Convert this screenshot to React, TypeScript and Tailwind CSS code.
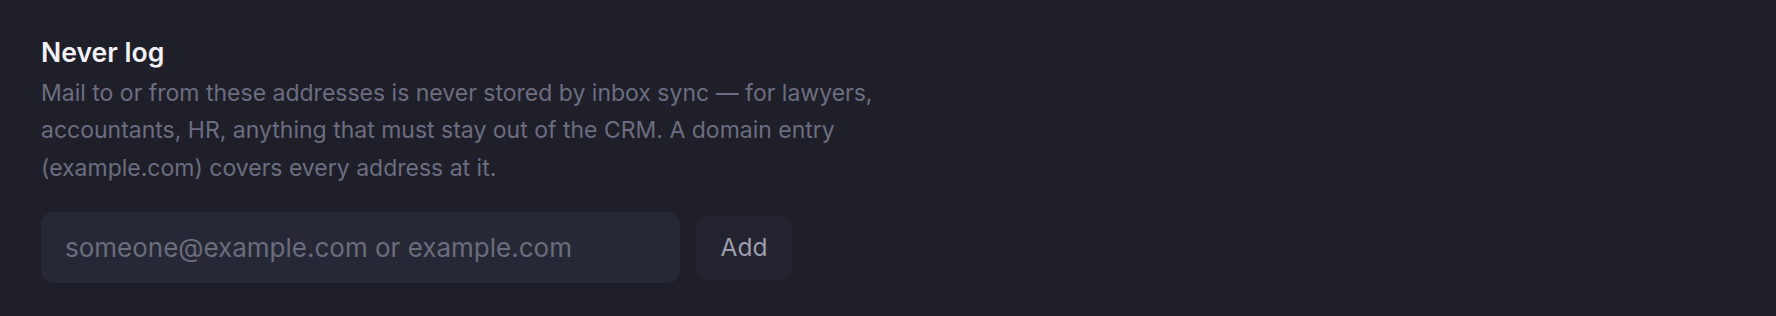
import { useState } from 'react';

const NeverLog = () => {
  const [value, setValue] = useState('');

  return (
    <section className="min-h-[316px] bg-[#1f1f29] px-[41px] pt-[33px] font-['Inter',sans-serif]">
      <h3 className="text-[26.6px] leading-[39px] font-semibold text-[#f1f1f6]">Never log</h3>
      <p className="mt-[3px] max-w-[936px] text-[23px] leading-[37.4px] text-[#6c6d80]">
        Mail to or from these addresses is never stored by inbox sync — for lawyers, accountants, HR, anything that
        must stay out of the CRM. A domain entry (example.com) covers every address at it.
      </p>
      <div className="mt-[25px] flex items-center gap-[16px]">
        <input
          value={value}
          onChange={(e) => setValue(e.target.value)}
          placeholder="someone@example.com or example.com"
          className="h-[71px] w-[639px] rounded-[13px] bg-[#262835] px-[24px] text-[26px] text-[#d4d4de] outline-none placeholder:text-[#6b6c7e]"
        />
        <button className="h-[64px] w-[96px] rounded-[13px] bg-[#23242f] text-[24.5px] text-[#9d9daf]">Add</button>
      </div>
    </section>
  );
};

export default function App() {
  return <NeverLog />;
}
